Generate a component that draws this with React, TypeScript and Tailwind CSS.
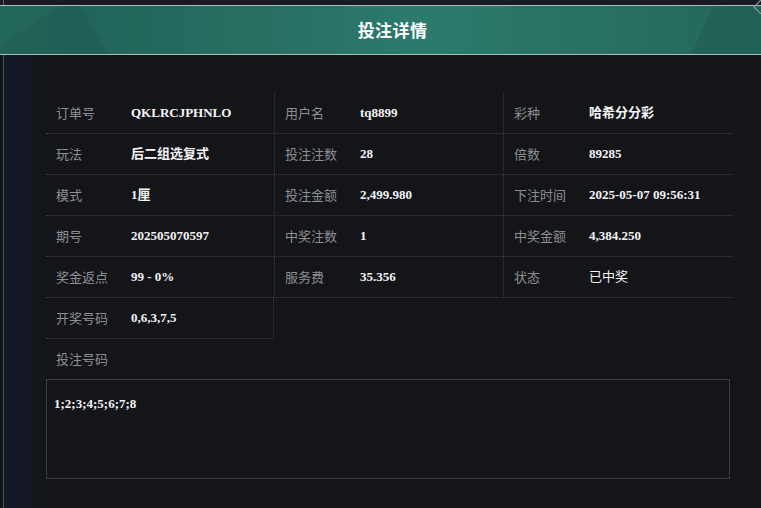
import React from 'react';

type Cell = { label: string; value: string; bold?: boolean };

const rows: Cell[][] = [
  [
    { label: '订单号', value: 'QKLRCJPHNLO' },
    { label: '用户名', value: 'tq8899' },
    { label: '彩种', value: '哈希分分彩' },
  ],
  [
    { label: '玩法', value: '后二组选复式' },
    { label: '投注注数', value: '28' },
    { label: '倍数', value: '89285' },
  ],
  [
    { label: '模式', value: '1厘' },
    { label: '投注金额', value: '2,499.980' },
    { label: '下注时间', value: '2025-05-07 09:56:31' },
  ],
  [
    { label: '期号', value: '202505070597' },
    { label: '中奖注数', value: '1' },
    { label: '中奖金额', value: '4,384.250' },
  ],
  [
    { label: '奖金返点', value: '99 - 0%' },
    { label: '服务费', value: '35.356' },
    { label: '状态', value: '已中奖', bold: false },
  ],
];

const labelFont = "font-['Noto_Sans_CJK_SC',sans-serif]";
const valueFont = "font-['Liberation_Serif','Noto_Sans_CJK_SC',serif]";

const InfoCell = ({ cell, first }: { cell: Cell; first?: boolean }) => (
  <div
    className={`flex items-center h-[41px] border-b border-dotted border-[#3a3d43] ${
      first ? 'pl-[10px]' : 'pl-[10px] border-l'
    }`}
  >
    <span className={`w-[75px] text-[13px] text-[#8d8f93] ${labelFont}`}>{cell.label}</span>
    <span
      className={`text-[13px] text-[#f4f4f4] ${valueFont} ${cell.bold === false ? 'font-normal' : 'font-bold'}`}
    >
      {cell.value}
    </span>
  </div>
);

export default function App() {
  return (
    <div className="w-[761px] h-[508px] overflow-hidden flex flex-col bg-[#131519]">
      {/* top strip */}
      <div className="h-[5px] shrink-0 bg-[#191a23] relative">
        <div className="absolute left-[3px] top-0 bottom-0 w-px bg-[#5b6068]" />
      </div>

      {/* title bar */}
      <div className="relative h-[50px] shrink-0 border-y border-[#aebdb9] bg-[linear-gradient(90deg,#23675b_0%,#22655a_12%,#286f62_35%,#2b7b6d_55%,#28705f_80%,#23675b_100%)] flex items-center justify-center pl-6">
        <svg className="absolute inset-0 w-full h-full" viewBox="0 0 761 48" preserveAspectRatio="none">
          <polygon points="60,0 80,0 108,48 0,48 0,40" fill="#163f37" opacity="0.14" />
          <polygon points="712,0 761,0 761,48 690,48" fill="#163f37" opacity="0.16" />
          <line x1="712" y1="0" x2="690" y2="48" stroke="#3b8a7b" strokeWidth="1" opacity="0.25" />
        </svg>
        <svg className="absolute right-0 -top-[6px] w-[10px] h-[14px]" viewBox="0 0 10 14">
          <path d="M10 0 L3 7 L10 14" fill="none" stroke="#8a9a98" strokeWidth="1.2" />
        </svg>
        <span className={`relative text-[17px] font-bold text-white tracking-wide ${labelFont}`}>投注详情</span>
      </div>

      {/* body */}
      <div className="flex-1 ml-[3px] border-l border-[#4f545c] bg-[linear-gradient(90deg,#121a27_0px,#131822_20px,#131519_40px)] pl-[42px] pt-[38px]">
        <div className="grid grid-cols-[228px_229px_230px]">
          {rows.map((row, i) => (
            <React.Fragment key={i}>
              {row.map((cell, j) => (
                <InfoCell key={j} cell={cell} first={j === 0} />
              ))}
            </React.Fragment>
          ))}
          <div className="flex items-center h-[41px] pl-[10px] border-b border-r border-dotted border-[#3a3d43]">
            <span className={`w-[75px] text-[13px] text-[#8d8f93] ${labelFont}`}>开奖号码</span>
            <span className={`text-[13px] font-bold text-[#f4f4f4] ${valueFont}`}>0,6,3,7,5</span>
          </div>
        </div>

        <div className="h-[40px] flex items-center pl-[10px]">
          <span className={`text-[13px] text-[#8d8f93] ${labelFont}`}>投注号码</span>
        </div>

        <div className="w-[684px] h-[100px] border border-[#3c3e43] bg-[#131519] px-[7px] pt-[10px]">
          <span className={`text-[13px] font-bold text-[#f4f4f4] ${valueFont}`}>1;2;3;4;5;6;7;8</span>
        </div>
      </div>
    </div>
  );
}
